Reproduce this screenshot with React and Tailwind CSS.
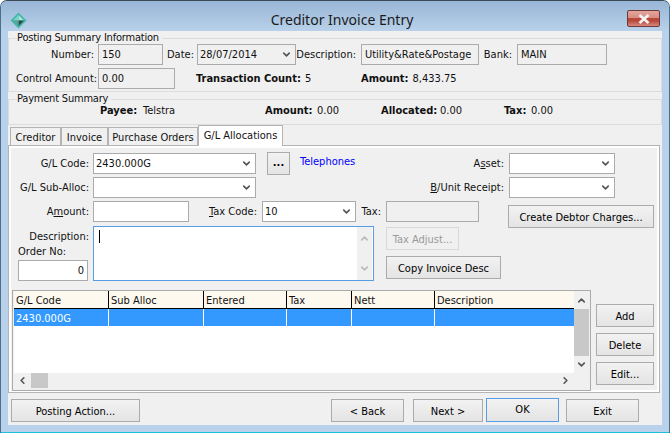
import { ChevronDown, ChevronUp, ChevronLeft, ChevronRight } from "lucide-react";

const font = "font-['DejaVu_Sans',sans-serif] font-stretch-condensed";

function Lbl({ w, children, className = "" }) {
  return <span className={`shrink-0 text-right whitespace-nowrap ${w} ${className}`}>{children}</span>;
}

function Box({ className = "", children, bg = "bg-[#f0f0f0]" }) {
  return (
    <div className={`shrink-0 border border-[#ababab] ${bg} h-full flex items-center px-[3px] whitespace-nowrap ${className}`}>
      {children}
    </div>
  );
}

function Select({ className = "", value, bg = "bg-white" }) {
  return (
    <div className={`shrink-0 border border-[#ababab] ${bg} h-full flex items-center justify-between pl-[2px] pr-[3px] ${className}`}>
      <span>{value}</span>
      <ChevronDown className="w-[11px] h-[11px] text-[#555]" strokeWidth={3.5} />
    </div>
  );
}

function Btn({ className = "", children, disabled }) {
  return (
    <button
      className={`shrink-0 border flex items-center justify-center whitespace-nowrap pt-[2px] ${
        disabled
          ? "border-[#d9d9d9] bg-[#f0f0f0] text-[#9a9a9a]"
          : "border-[#ababab] bg-gradient-to-b from-[#f2f2f2] to-[#e4e4e4] text-black"
      } ${className}`}
    >
      {children}
    </button>
  );
}

function Tab({ w, active, children }) {
  return (
    <div
      className={`flex items-center justify-center whitespace-nowrap border-t border-x border-[#b4b4b4] ${w} ${
        active ? "h-[21px] bg-white -mb-px z-10 pb-px" : "h-[18px] bg-[#f0f0f0] pt-[2px]"
      }`}
    >
      {children}
    </div>
  );
}

const cols = [
  ["G/L Code", "w-[95px]"],
  ["Sub Alloc", "w-[95px]"],
  ["Entered", "w-[83px]"],
  ["Tax", "w-[65px]"],
  ["Nett", "w-[83px]"],
  ["Description", "flex-1"],
];

export default function App() {
  return (
    <div className={`${font} w-[670px] h-[433px] overflow-hidden bg-white text-[11px] leading-[14px] text-[#111]`}>
      <div className="w-full h-full flex flex-col rounded-t-[7px] border border-b-0 border-[#3c4a58] border-x-[#4a6f8c] bg-[#b9d1ea]">
        {/* title bar */}
        <div className="h-[30px] shrink-0 flex items-center bg-gradient-to-b from-[#98b6d6] to-[#b9d1ea] rounded-t-[6px]">
          <svg width="17" height="17" viewBox="0 0 17 17" className="ml-[9px] mt-[8px]">
            <path d="M8.5 0.5 L16.5 8.5 L8.5 16.5 L0.5 8.5 Z" fill="#45b5aa" />
            <path d="M8.5 3 L14 8.5 L8.5 8.5 Z" fill="#a6e6dc" />
            <path d="M8.5 3 L3 8.5 L8.5 8.5 Z" fill="#7fd4c9" />
            <path d="M8.5 8.5 L14 8.5 L8.5 14 Z" fill="#2c4b47" />
            <path d="M8.5 8.5 L3 8.5 L8.5 14 Z" fill="#5f9f97" />
          </svg>
          <div className="flex-1 text-center font-['Noto_Sans',sans-serif] font-stretch-normal text-[14px] text-[#1a1a1a] mt-[8px] ml-[30px]">Creditor Invoice Entry</div>
          <div className="w-[33px] h-[17px] mr-[9px] mt-[5px] rounded-[2px] border border-[#6e3a36] bg-[linear-gradient(#e3a59d,#d98d83_45%,#b8483a_50%,#b8483a_65%,#d68a80)] flex items-center justify-center">
            <svg width="14" height="10" viewBox="0 0 14 10">
              <path d="M2.5 1 L11.5 9 M11.5 1 L2.5 9" stroke="#f4f4f4" strokeWidth="2.6" />
            </svg>
          </div>
        </div>

        {/* client area */}
        <div className="mx-[7px] h-[394px] bg-[#f0f0f0] shrink-0 flex flex-col">
          <fieldset className="h-[61px] border border-[#dcdcdc] shrink-0">
            <legend className="ml-[8px] pr-[3px] h-[14px] tracking-[-0.2px]">Posting Summary Information</legend>
            <div className="h-[21px] -mt-px ml-[7px] flex items-center">
              <Lbl w="w-[78px]">Number:</Lbl>
              <Box className="ml-[4px] w-[65px] h-[21px]">150</Box>
              <Lbl w="w-[31px]">Date:</Lbl>
              <Select className="ml-[3px] w-[99px] h-[21px]" value="28/07/2014" bg="bg-[#f0f0f0]" />
              <Lbl w="w-[60px]">Description:</Lbl>
              <Box className="ml-[5px] w-[118px]">Utility&amp;Rate&amp;Postage</Box>
              <Lbl w="w-[33px]">Bank:</Lbl>
              <Box className="ml-[5px] w-[90px]">MAIN</Box>
            </div>
            <div className="h-[21px] mt-[3px] ml-[7px] flex items-center">
              <Lbl w="w-[78px]">Control Amount:</Lbl>
              <Box className="ml-[4px] w-[77px]">0.00</Box>
              <span className="ml-[21px] w-[109px] font-bold shrink-0">Transaction Count:</span>
              <span className="w-[56px] shrink-0">5</span>
              <span className="font-bold">Amount:</span>
              <span className="ml-[4px]">8,433.75</span>
            </div>
          </fieldset>

          <fieldset className="h-[33px] border border-[#dcdcdc] shrink-0">
            <legend className="ml-[8px] pr-[3px] h-[14px] tracking-[-0.2px]">Payment Summary</legend>
            <div className="h-[13px] -mt-[2px] flex items-center">
              <span className="ml-[91px] w-[43px] font-bold shrink-0">Payee:</span>
              <span className="w-[122px] shrink-0">Telstra</span>
              <span className="w-[52px] font-bold shrink-0">Amount:</span>
              <span className="w-[64px] shrink-0">0.00</span>
              <span className="w-[59px] font-bold shrink-0">Allocated:</span>
              <span className="w-[64px] shrink-0">0.00</span>
              <span className="w-[27px] font-bold shrink-0">Tax:</span>
              <span>0.00</span>
            </div>
          </fieldset>

          {/* tabs */}
          <div className="h-[20px] flex items-end pl-[2px] shrink-0">
            <Tab w="w-[51px]">Creditor</Tab>
            <Tab w="w-[47px]">Invoice</Tab>
            <Tab w="w-[90px]">Purchase Orders</Tab>
            <Tab w="w-[85px]" active>G/L Allocations</Tab>
          </div>

          <div className="w-[652px] h-[248px] border border-[#b4b4b4] bg-[#f0f0f0] shrink-0 px-[3px] pt-[7px] shadow-[inset_0_0_0_2px_#fff]">
            {/* row 1 */}
            <div className="h-[21px] flex items-center">
              <Lbl w="w-[77px]">G/L Code:</Lbl>
              <Select className="ml-[4px] w-[163px]" value="2430.000G" />
              <Btn className="ml-[11px] w-[23px] h-[23px] font-bold pb-[3px]">...</Btn>
              <span className="ml-[10px] w-[108px] text-[#0000ff] shrink-0 -mt-[3px]">Telephones</span>
              <Lbl w="w-[96px]">A<u>s</u>set:</Lbl>
              <Select className="ml-[5px] w-[106px]" />
            </div>
            {/* row 2 */}
            <div className="h-[21px] mt-[3px] flex items-center">
              <Lbl w="w-[77px]">G/L Sub-Alloc:</Lbl>
              <Select className="ml-[4px] w-[163px]" />
              <Lbl w="w-[248px]"><u>B</u>/Unit Receipt:</Lbl>
              <Select className="ml-[5px] w-[106px]" />
            </div>
            {/* row 3 */}
            <div className="h-[21px] mt-[3px] flex items-start">
              <Lbl w="w-[77px]" className="mt-[4px]">A<u>m</u>ount:</Lbl>
              <Box className="ml-[4px] w-[96px]" bg="bg-white" />
              <Lbl w="w-[68px]" className="mt-[4px]"><u>T</u>ax Code:</Lbl>
              <Select className="ml-[5px] w-[94px]" value="10" />
              <Lbl w="w-[25px]" className="mt-[4px]">Tax:</Lbl>
              <Box className="ml-[5px] w-[93px]" />
              <Btn className="ml-[29px] mt-[4px] w-[146px] h-[23px]">Create Debtor Charges...</Btn>
            </div>
            {/* row 4 */}
            <div className="h-[55px] mt-[4px] flex items-start">
              <div className="w-[77px] shrink-0 flex flex-col">
                <span className="text-right mt-[4px] h-[14px]">Description:</span>
                <span className="pl-[6px] mt-[1px] h-[14px]">Order No:</span>
                <div className="ml-[6px] mt-px w-[70px] h-[21px] border border-[#ababab] bg-white flex items-center justify-end pr-[3px]">0</div>
              </div>
              <div className="ml-[4px] w-[281px] h-[55px] border border-[#569de5] bg-white flex shrink-0">
                <div className="flex-1 pl-[5px] pt-[3px]">
                  <div className="w-px h-[13px] bg-black" />
                </div>
                <div className="w-[15px] bg-[#f0f0f0] mr-px flex flex-col justify-between items-center py-[6px] text-[#bbb]">
                  <ChevronUp className="w-[11px] h-[11px]" strokeWidth={3.5} />
                  <ChevronDown className="w-[11px] h-[11px]" strokeWidth={3.5} />
                </div>
              </div>
              <div className="ml-[12px] flex flex-col">
                <Btn disabled className="w-[73px] h-[23px] mt-px">Tax Adjust...</Btn>
                <Btn className="w-[115px] h-[23px] mt-[6px]">Copy Invoice Desc</Btn>
              </div>
            </div>

            {/* grid + side buttons */}
            <div className="flex mt-[9px]">
              <div className="w-[579px] h-[101px] border border-[#ababab] px-px pb-[2px] shrink-0">
                <div className="h-full flex flex-col">
                  <div className="flex flex-1 min-h-0">
                    <div className="flex-1 bg-white flex flex-col">
                      <div className="h-[18px] flex bg-[#fef9ef] border-b border-black">
                        {cols.map(([name, w], i) => (
                          <div key={name} className={`${w} pl-[2px] pt-[2px] flex items-center ${i < 5 ? "border-r border-black" : ""}`}>{name}</div>
                        ))}
                      </div>
                      <div className="h-[17px] flex bg-[#3399ff] text-white">
                        {cols.map(([name, w], i) => (
                          <div key={name} className={`${w} pl-[2px] pt-[2px] flex items-center ${i < 5 ? "border-r border-white" : ""}`}>{i === 0 ? "2430.000G" : ""}</div>
                        ))}
                      </div>
                    </div>
                    <div className="w-[15px] bg-[#f0f0f0] flex flex-col items-center text-[#555]">
                      <div className="h-[18px] flex items-center"><ChevronUp className="w-[11px] h-[11px]" strokeWidth={3.5} /></div>
                      <div className="w-full h-[47px] bg-[#c8c8c8]" />
                      <div className="flex-1" />
                      <div className="h-[17px] flex items-center"><ChevronDown className="w-[11px] h-[11px]" strokeWidth={3.5} /></div>
                    </div>
                  </div>
                  <div className="h-[15px] bg-[#f0f0f0] flex items-center text-[#555] shrink-0">
                    <div className="w-[17px] flex justify-center"><ChevronLeft className="w-[11px] h-[11px]" strokeWidth={3.5} /></div>
                    <div className="w-[17px] h-full bg-[#c8c8c8]" />
                    <div className="flex-1" />
                    <div className="w-[17px] mr-[15px] flex justify-center"><ChevronRight className="w-[11px] h-[11px]" strokeWidth={3.5} /></div>
                  </div>
                </div>
              </div>
              <div className="ml-[5px] flex flex-col mt-[14px]">
                <Btn className="w-[58px] h-[23px]">Add</Btn>
                <Btn className="w-[58px] h-[23px] mt-[6px]">Delete</Btn>
                <Btn className="w-[58px] h-[23px] mt-[6px]">Edit...</Btn>
              </div>
            </div>
          </div>

          {/* footer */}
          <div className="flex items-start pt-[6px] pl-[3px]">
            <Btn className="w-[129px] h-[23px]">Posting Action...</Btn>
            <Btn className="ml-[191px] w-[73px] h-[23px]">&lt; Back</Btn>
            <Btn className="ml-[9px] w-[70px] h-[23px]">Next &gt;</Btn>
            <Btn className="ml-[3px] w-[73px] h-[24px] -mt-px !border-[#569de5] pb-[2px]">OK</Btn>
            <Btn className="ml-[7px] w-[73px] h-[23px]">Exit</Btn>
          </div>
        </div>
        <div className="flex-1" />
        <div className="h-px bg-[#1cc0d8] shrink-0" />
      </div>
    </div>
  );
}
